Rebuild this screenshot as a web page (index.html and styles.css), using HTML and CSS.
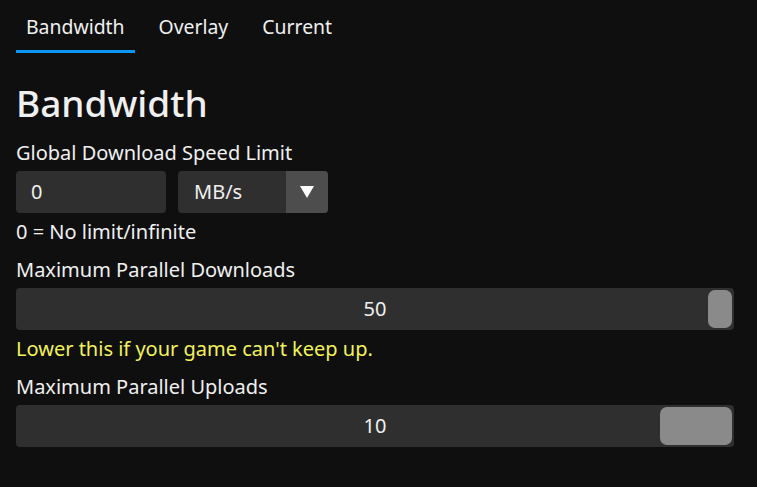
FILE: index.html
```html
<!DOCTYPE html>
<html lang="en">
<head>
    <meta charset="UTF-8">
    <title>Settings - Bandwidth</title>
    <link rel="stylesheet" href="styles.css">
</head>
<body>
    <div class="tabs">
        <div class="tab active">Bandwidth</div>
        <div class="tab">Overlay</div>
        <div class="tab">Current</div>
    </div>

    <div class="content">
        <h1>Bandwidth</h1>

        <div class="field first">
            <label>Global Download Speed Limit</label>
            <div class="row">
                <div class="text-input">0</div>
                <div class="select">
                    <span class="select-value">MB/s</span>
                    <span class="select-arrow">
                        <svg width="14" height="12" viewBox="0 0 14 12"><path d="M0 0 L14 0 L7 12 Z" fill="#ffffff"/></svg>
                    </span>
                </div>
            </div>
            <p class="note">0 = No limit/infinite</p>
        </div>

        <div class="field">
            <label>Maximum Parallel Downloads</label>
            <div class="slider">
                <span class="slider-value">50</span>
                <span class="slider-thumb" style="width: 24px"></span>
            </div>
            <p class="note warn">Lower this if your game can't keep up.</p>
        </div>

        <div class="field">
            <label>Maximum Parallel Uploads</label>
            <div class="slider">
                <span class="slider-value">10</span>
                <span class="slider-thumb" style="width: 72px"></span>
            </div>
        </div>
    </div>
</body>
</html>
```

FILE: styles.css
```css
body {
    margin: 0;
    background: #0f0f0f;
    color: #f0f0f0;
    font-family: 'Noto Sans', sans-serif;
    font-size: 20px;
}
.tabs {
    display: flex;
    gap: 14px;
    padding-left: 16px;
}
.tab {
    padding: 4px 10px 0;
    font-size: 19.4px;
    line-height: 46px;
    border-bottom: 3px solid transparent;
}
.tab.active {
    border-bottom-color: #0a96f5;
}
.content {
    padding: 0 23px 0 16px;
}
h1 {
    margin: 28px 0 0;
    font-size: 37px;
    font-weight: 500;
    line-height: 44px;
}
.field {
    margin-top: 11px;
}
.field.first {
    margin-top: 14px;
}
label {
    display: block;
    padding-top: 1px;
    line-height: 26px;
    margin-bottom: 5px;
}
.row {
    display: flex;
    gap: 12px;
}
.text-input {
    width: 150px;
    height: 42px;
    box-sizing: border-box;
    padding-left: 15px;
    line-height: 42px;
    background: #2f2f2f;
    border-radius: 4px;
}
.select {
    width: 150px;
    height: 42px;
    display: flex;
    background: #2f2f2f;
    border-radius: 4px;
    overflow: hidden;
}
.select-value {
    flex: 1;
    padding-left: 16px;
    line-height: 42px;
}
.select-arrow {
    width: 42px;
    background: #4d4d4d;
    display: flex;
    align-items: center;
    justify-content: center;
}
.note {
    margin: 6px 0 0;
    line-height: 26px;
}
.warn {
    margin-top: 6px;
    color: #f2f25a;
}
.slider {
    position: relative;
    height: 42px;
    background: #2f2f2f;
    border-radius: 4px;
    display: flex;
    align-items: center;
    justify-content: center;
}
.slider-value {
    line-height: 42px;
}
.slider-thumb {
    position: absolute;
    top: 2px;
    bottom: 2px;
    right: 2px;
    background: #8a8a8a;
    border-radius: 7px;
}
```
